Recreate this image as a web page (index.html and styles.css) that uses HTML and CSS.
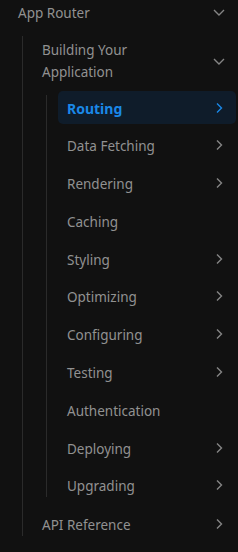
FILE: index.html
```html
<!DOCTYPE html>
<html lang="en">
<head>
  <meta charset="UTF-8" />
  <meta name="viewport" content="width=device-width, initial-scale=1.0"/>
  <title>Docs Sidebar</title>
  <link rel="stylesheet" href="styles.css">
</head>
<body>

  <nav class="sidebar">
    <ul class="tree">
      <li>
        <a class="row row-top">
          <span>App Router</span>
          <svg class="icon" viewBox="0 0 16 16"><path d="M3 6l5 5 5-5"/></svg>
        </a>

        <ul class="tree sub">
          <li>
            <a class="row row-wrap">
              <span>Building Your<br>Application</span>
              <svg class="icon" viewBox="0 0 16 16"><path d="M3 6l5 5 5-5"/></svg>
            </a>

            <!-- pages -->
            <ul class="tree sub pages">
              <li><a class="row active"><span>Routing</span><svg class="icon" viewBox="0 0 16 16"><path d="M6 3.5l4.5 4.5-4.5 4.5"/></svg></a></li>
              <li><a class="row"><span>Data Fetching</span><svg class="icon" viewBox="0 0 16 16"><path d="M6 3.5l4.5 4.5-4.5 4.5"/></svg></a></li>
              <li><a class="row"><span>Rendering</span><svg class="icon" viewBox="0 0 16 16"><path d="M6 3.5l4.5 4.5-4.5 4.5"/></svg></a></li>
              <li><a class="row"><span>Caching</span></a></li>
              <li><a class="row"><span>Styling</span><svg class="icon" viewBox="0 0 16 16"><path d="M6 3.5l4.5 4.5-4.5 4.5"/></svg></a></li>
              <li><a class="row"><span>Optimizing</span><svg class="icon" viewBox="0 0 16 16"><path d="M6 3.5l4.5 4.5-4.5 4.5"/></svg></a></li>
              <li><a class="row"><span>Configuring</span><svg class="icon" viewBox="0 0 16 16"><path d="M6 3.5l4.5 4.5-4.5 4.5"/></svg></a></li>
              <li><a class="row"><span>Testing</span><svg class="icon" viewBox="0 0 16 16"><path d="M6 3.5l4.5 4.5-4.5 4.5"/></svg></a></li>
              <li><a class="row"><span>Authentication</span></a></li>
              <li><a class="row"><span>Deploying</span><svg class="icon" viewBox="0 0 16 16"><path d="M6 3.5l4.5 4.5-4.5 4.5"/></svg></a></li>
              <li><a class="row"><span>Upgrading</span><svg class="icon" viewBox="0 0 16 16"><path d="M6 3.5l4.5 4.5-4.5 4.5"/></svg></a></li>
            </ul>
          </li>

          <li class="api">
            <a class="row"><span>API Reference</span><svg class="icon" viewBox="0 0 16 16"><path d="M6 3.5l4.5 4.5-4.5 4.5"/></svg></a>
          </li>
        </ul>
      </li>
    </ul>
  </nav>

</body>
</html>
```

FILE: styles.css
```css
body {
  margin: 0;
  background: #111111;
  font-family: 'Noto Sans', 'Open Sans', sans-serif;
  font-size: 13.5px;
  color: #919191;
}

.sidebar {
  width: 238px;
  padding: 0 2px 0 10px;
  box-sizing: border-box;
}

.tree {
  list-style: none;
  margin: 0;
  padding: 0;
}

.row {
  display: flex;
  align-items: center;
  justify-content: space-between;
  height: 33px;
  padding: 0 9px 0 8px;
  border-radius: 5px;
  cursor: pointer;
}

.row span {
  padding-top: 2px;
}

.row-top {
  height: 24px;
}

.row-wrap {
  height: auto;
  padding-top: 8px;
  padding-bottom: 8px;
  line-height: 22px;
}

.row-wrap span {
  padding-top: 0;
}

.icon {
  width: 16px;
  height: 16px;
  flex-shrink: 0;
  fill: none;
  stroke: #858585;
  stroke-width: 1.4;
}

/* nested lists with guide line */
.sub {
  position: relative;
  margin-left: 12px;
  padding-left: 12px;
}

.sub::before {
  content: "";
  position: absolute;
  left: 0;
  top: 5px;
  bottom: 6px;
  width: 1px;
  background: #2b2b2b;
}

.tree > li > .sub:not(.pages) {
  margin-top: 7px;
}

.pages {
  display: flex;
  flex-direction: column;
  gap: 4.8px;
}

.pages::before {
  top: 4px;
  bottom: 5px;
}

.pages .row {
  padding-left: 9px;
}

.api {
  margin-top: 5px;
}

.api .row {
  height: 35px;
}

.row.active {
  background: #0f1c2a;
  color: #1a88e8;
  font-weight: 700;
  font-size: 14px;
}

.row.active .icon {
  stroke: #1a88e8;
}
```
